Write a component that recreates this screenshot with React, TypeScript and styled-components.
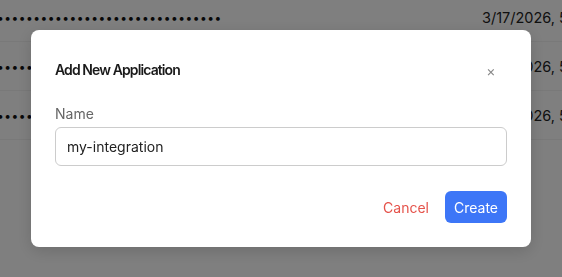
import styled, { createGlobalStyle } from 'styled-components';

const GlobalStyle = createGlobalStyle`
	html, body {
		margin: 0;
		padding: 0;
		background: #fff;
		font-family: Inter, "Liberation Sans", sans-serif;
		overflow: hidden;
	}
`;

const rows = [
	{ key: '•'.repeat(31), created: '3/17/2026, 5:42:18 PM' },
	{ key: '•'.repeat(31), created: '3/17/2026, 5:40:02 PM' },
	{ key: '•'.repeat(31), created: '3/17/2026, 5:38:47 PM' },
];

const App = (): JSX.Element => {
	return (
		<>
			<GlobalStyle />
			<Table>
				{rows.map((row, i) => (
					<Row key={i}>
						<KeyCell>{row.key}</KeyCell>
						<DateCell>{row.created}</DateCell>
					</Row>
				))}
			</Table>
			<Overlay>
				<Modal>
					<Header>
						<Title>Add New Application</Title>
						<CloseButton aria-label="Close">×</CloseButton>
					</Header>
					<Label htmlFor="app-name">Name</Label>
					<Input id="app-name" defaultValue="my-integration" />
					<Footer>
						<Button variant="ghost">Cancel</Button>
						<Button variant="primary">Create</Button>
					</Footer>
				</Modal>
			</Overlay>
		</>
	);
};

const Table = styled.div`
	margin-top: -7px;
	display: flex;
	flex-direction: column;
	width: 100vw;
`;

const Row = styled.div`
	display: flex;
	align-items: center;
	height: 48px;
	border-bottom: 1px solid #f2f2f2;
	white-space: nowrap;
	overflow: hidden;
`;

const KeyCell = styled.div`
	width: 484px;
	flex-shrink: 0;
	font-size: 12px;
	letter-spacing: 0.5px;
	color: #111;
	margin-left: -3px;
`;

const DateCell = styled.div`
	flex-shrink: 0;
	font-size: 14.5px;
	color: #222;
	margin-left: 1px;
`;

const Overlay = styled.div`
	position: fixed;
	inset: 0;
	background: rgba(0, 0, 0, 0.5);
	display: flex;
	align-items: center;
	justify-content: center;
`;

const Modal = styled.div`
	width: 500px;
	box-sizing: border-box;
	background: #fff;
	border-radius: 8px;
	padding: 30px 24px 24px;
	display: flex;
	flex-direction: column;
	box-shadow: 0 4px 16px rgba(0, 0, 0, 0.15);
`;

const Header = styled.div`
	display: flex;
	align-items: center;
	justify-content: space-between;
	height: 20px;
	margin-bottom: 24px;
`;

const Title = styled.h2`
	margin: 0;
	font-size: 14px;
	line-height: 20px;
	font-weight: 600;
	letter-spacing: -0.9px;
	color: #1a1a1a;
`;

const CloseButton = styled.button`
	width: 32px;
	height: 32px;
	border: none;
	background: none;
	padding: 0;
	font-family: inherit;
	font-size: 14px;
	color: #888;
	cursor: pointer;
`;

const Label = styled.label`
	display: block;
	font-size: 14px;
	line-height: 20px;
	color: #666;
	margin-bottom: 3px;
`;

const Input = styled.input`
	height: 39px;
	box-sizing: border-box;
	border: 1px solid #ccc;
	border-radius: 6px;
	padding: 0 11px;
	font-family: inherit;
	font-size: 14px;
	color: #222;
	outline: none;
`;

const Footer = styled.div`
	display: flex;
	justify-content: flex-end;
	gap: 4px;
	margin-top: 25px;
`;

const Button = styled.button<{ variant: 'ghost' | 'primary' }>`
	height: 32px;
	border: none;
	border-radius: 6px;
	padding: 0 ${({ variant }): string => (variant === 'primary' ? '9px' : '12px')};
	font-family: inherit;
	font-size: 14px;
	cursor: pointer;
	background: ${({ variant }): string => (variant === 'primary' ? '#3d76f7' : 'transparent')};
	color: ${({ variant }): string => (variant === 'primary' ? '#fff' : '#e5534b')};
`;

export default App;
